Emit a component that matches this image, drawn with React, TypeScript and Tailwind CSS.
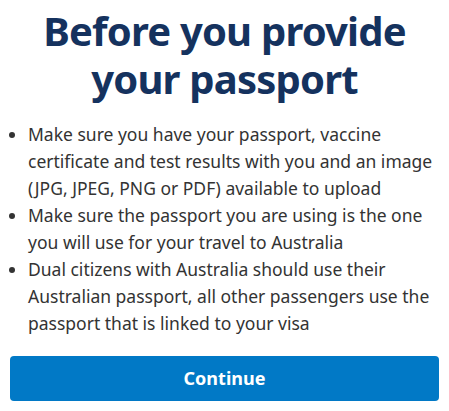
export default function App() {
  return (
    <div className="w-[449px] h-[411px] bg-white px-[10px] pt-[7px]" style={{ fontFamily: '"Noto Sans", "Open Sans", sans-serif' }}>
      <h1 className="text-center text-[40px] leading-[48px] font-bold tracking-[-0.8px] text-[#15325e]">
        Before you provide your passport
      </h1>
      <ul className="mt-[18px] text-[17.5px] leading-[27px] text-[#333333] list-disc pl-[18px] marker:text-[#333333]">
        <li>Make sure you have your passport, vaccine certificate and test results with you and an image (JPG, JPEG, PNG or PDF) available to upload</li>
        <li>Make sure the passport you are using is the one you will use for your travel to Australia</li>
        <li>Dual citizens with Australia should use their Australian passport, all other passengers use the passport that is linked to your visa</li>
      </ul>
      <button className="mt-[19px] w-full h-[45px] rounded-[4px] bg-[#0179c6] text-white text-[18px] font-bold">
        Continue
      </button>
    </div>
  );
}
